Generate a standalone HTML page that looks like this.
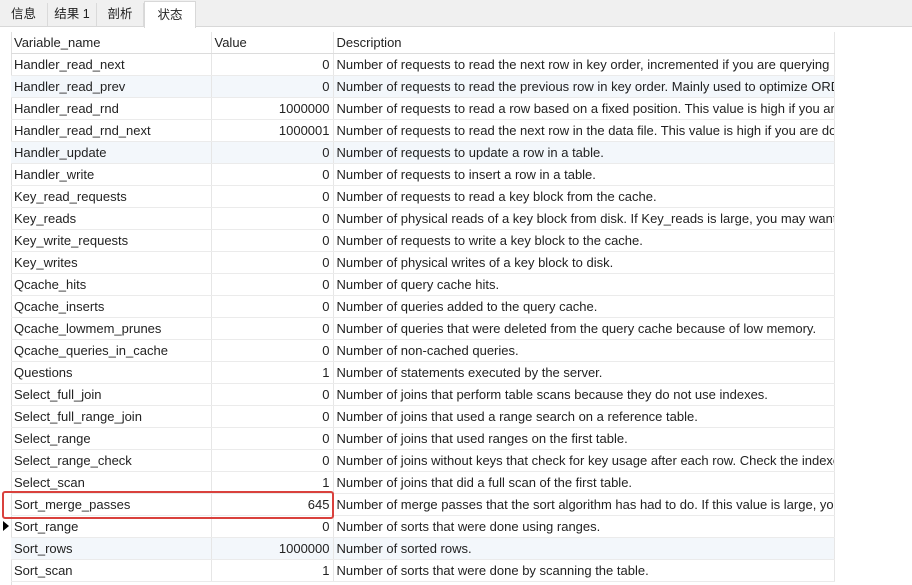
<!DOCTYPE html>
<html><head><meta charset="utf-8"><style>
body{margin:0;width:912px;height:585px;background:#fff;overflow:hidden;font-family:"Liberation Sans","Noto Sans CJK SC",sans-serif;font-size:13px;color:#222;position:relative}
.tabs{position:absolute;left:0;top:0;width:912px;height:26px;background:#f0f0f0;border-bottom:1px solid #d8d8d8}
.tab{position:absolute;top:3px;height:23px;line-height:23px;font-size:12.5px;color:#222;border-right:1px solid #dadada;text-align:center}
.tab.sel{background:#fff;top:1px;height:26px;line-height:26px;border:1px solid #d8d8d8;border-bottom:none;}
.grid{position:absolute;left:11px;top:32px;width:823px;border-collapse:collapse;table-layout:fixed}
.grid td{height:21px;padding:0 3px;border-bottom:1px solid #ebebeb;border-right:1px solid #e6e6e6;white-space:nowrap;overflow:hidden}
.grid td:nth-child(2){text-align:right}
.grid tr.l td{background:#f3f7fb}
.grid tr.h td{border-bottom:1px solid #dcdcdc}
.box{position:absolute;left:2px;top:491px;width:332px;height:28px;border:2px solid #d9413d;border-radius:3px;box-sizing:border-box}
.arrow{position:absolute;left:3px;top:521px;width:0;height:0;border-top:5px solid transparent;border-bottom:5px solid transparent;border-left:6px solid #000}
.lb{position:absolute;left:11px;top:32px;width:1px;height:553px;background:#e0e0e0}
</style></head><body>
<div class="tabs">
<div class="tab" style="left:0;width:47px">信息</div>
<div class="tab" style="left:48px;width:48px">结果 1</div>
<div class="tab" style="left:97px;width:46px">剖析</div>
<div class="tab sel" style="left:144px;width:50px">状态</div>
</div>
<div class="lb"></div>
<table class="grid">
<colgroup><col style="width:200px"><col style="width:122px"><col style="width:501px"></colgroup>
<tr class="h"><td>Variable_name</td><td style="text-align:left">Value</td><td>Description</td></tr>
<tr><td>Handler_read_next</td><td>0</td><td>Number of requests to read the next row in key order, incremented if you are querying</td></tr>
<tr class="l"><td>Handler_read_prev</td><td>0</td><td>Number of requests to read the previous row in key order. Mainly used to optimize ORDER</td></tr>
<tr><td>Handler_read_rnd</td><td>1000000</td><td>Number of requests to read a row based on a fixed position. This value is high if you are</td></tr>
<tr><td>Handler_read_rnd_next</td><td>1000001</td><td>Number of requests to read the next row in the data file. This value is high if you are doing</td></tr>
<tr class="l"><td>Handler_update</td><td>0</td><td>Number of requests to update a row in a table.</td></tr>
<tr><td>Handler_write</td><td>0</td><td>Number of requests to insert a row in a table.</td></tr>
<tr><td>Key_read_requests</td><td>0</td><td>Number of requests to read a key block from the cache.</td></tr>
<tr><td>Key_reads</td><td>0</td><td>Number of physical reads of a key block from disk. If Key_reads is large, you may want</td></tr>
<tr><td>Key_write_requests</td><td>0</td><td>Number of requests to write a key block to the cache.</td></tr>
<tr><td>Key_writes</td><td>0</td><td>Number of physical writes of a key block to disk.</td></tr>
<tr><td>Qcache_hits</td><td>0</td><td>Number of query cache hits.</td></tr>
<tr><td>Qcache_inserts</td><td>0</td><td>Number of queries added to the query cache.</td></tr>
<tr><td>Qcache_lowmem_prunes</td><td>0</td><td>Number of queries that were deleted from the query cache because of low memory.</td></tr>
<tr><td>Qcache_queries_in_cache</td><td>0</td><td>Number of non-cached queries.</td></tr>
<tr><td>Questions</td><td>1</td><td>Number of statements executed by the server.</td></tr>
<tr><td>Select_full_join</td><td>0</td><td>Number of joins that perform table scans because they do not use indexes.</td></tr>
<tr><td>Select_full_range_join</td><td>0</td><td>Number of joins that used a range search on a reference table.</td></tr>
<tr><td>Select_range</td><td>0</td><td>Number of joins that used ranges on the first table.</td></tr>
<tr><td>Select_range_check</td><td>0</td><td>Number of joins without keys that check for key usage after each row. Check the indexes</td></tr>
<tr><td>Select_scan</td><td>1</td><td>Number of joins that did a full scan of the first table.</td></tr>
<tr><td>Sort_merge_passes</td><td>645</td><td>Number of merge passes that the sort algorithm has had to do. If this value is large, you</td></tr>
<tr><td>Sort_range</td><td>0</td><td>Number of sorts that were done using ranges.</td></tr>
<tr class="l"><td>Sort_rows</td><td>1000000</td><td>Number of sorted rows.</td></tr>
<tr><td>Sort_scan</td><td>1</td><td>Number of sorts that were done by scanning the table.</td></tr>
</table>
<div class="box"></div>
<div class="arrow"></div>
</body></html>
